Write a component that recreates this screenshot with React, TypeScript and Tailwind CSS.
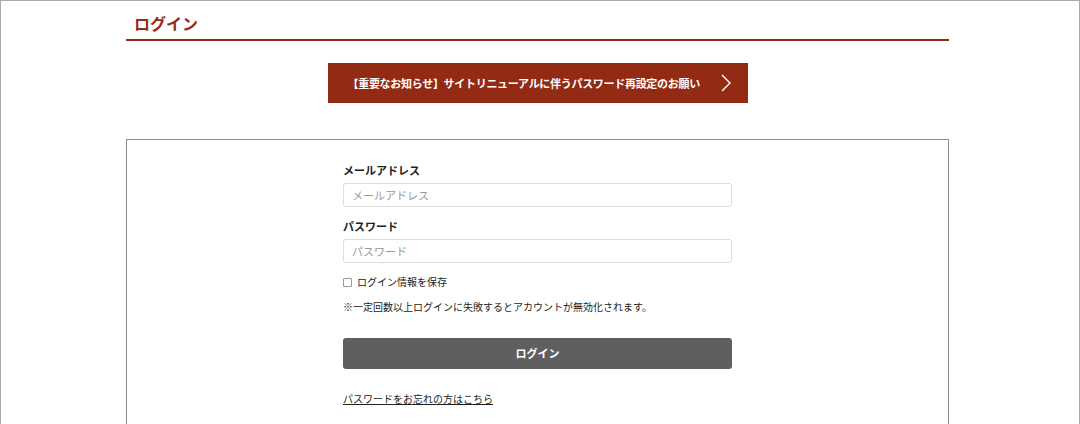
import React from "react";

const font = { fontFamily: '"Noto Sans CJK JP", "Noto Sans", sans-serif' };

function Chevron() {
  return (
    <svg width="10" height="18" viewBox="0 0 10 18" fill="none">
      <path d="M1 1l8 8-8 8" stroke="white" strokeWidth="1.4" />
    </svg>
  );
}

export default function App() {
  return (
    <div
      className="w-[1080px] h-[424px] overflow-hidden bg-white border border-b-0 border-[#aaaaaa] text-[#222]"
      style={font}
    >
      <div className="ml-[125px] w-[823px]">
        <div className="h-[40px] border-b-2 border-[#962c17] pl-[8px] pt-[10px]">
          <h1 className="text-[16px] font-bold leading-[24px] text-[#962c17]">ログイン</h1>
        </div>

        <div className="mt-[22px] flex justify-center">
          <a className="w-[420px] h-[40px] bg-[#932a14] flex items-center text-white">
            <span className="flex-1 pl-[20px] text-[11px] font-bold tracking-[-0.3px]">
              【重要なお知らせ】サイトリニューアルに伴うパスワード再設定のお願い
            </span>
            <span className="pr-[17px] flex items-center">
              <Chevron />
            </span>
          </a>
        </div>

        <div className="mt-[36px] border border-[#8c8c8c] h-[300px] pt-[22px]">
          <div className="w-[389px] mx-auto">
            <label className="block text-[11px] font-bold leading-[16px]">メールアドレス</label>
            <input
              className="mt-[5px] block w-full h-[24px] border border-[#dddddd] rounded-[3px] px-[8px] text-[11px] placeholder:text-[#999]"
              placeholder="メールアドレス"
            />
            <label className="mt-[11px] block text-[11px] font-bold leading-[16px]">パスワード</label>
            <input
              className="mt-[5px] block w-full h-[24px] border border-[#dddddd] rounded-[3px] px-[8px] text-[11px] placeholder:text-[#999]"
              placeholder="パスワード"
            />
            <div className="mt-[11px] flex items-center gap-[5px] text-[10px] leading-[16px]">
              <span className="w-[9px] h-[9px] border border-[#999] rounded-[1px] inline-block" />
              <span>ログイン情報を保存</span>
            </div>
            <p className="mt-[9px] text-[10px] leading-[16px]">
              ※一定回数以上ログインに失敗するとアカウントが無効化されます。
            </p>
            <button className="mt-[23px] w-full h-[31px] bg-[#5f5f5f] rounded-[3px] text-white text-[11px] font-bold">
              ログイン
            </button>
            <a className="mt-[22px] inline-block text-[10px] leading-[16px] underline text-[#222]">
              パスワードをお忘れの方はこちら
            </a>
          </div>
        </div>
      </div>
    </div>
  );
}
